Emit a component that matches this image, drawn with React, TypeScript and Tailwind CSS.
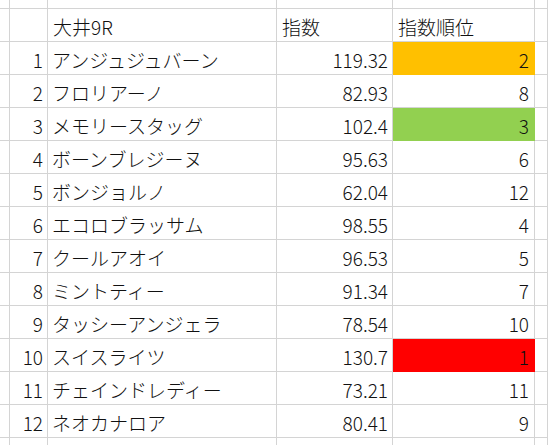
import React from "react";

const rows: [number, string, string, number, string | null][] = [
  [1, "アンジュジュバーン", "119.32", 2, "bg-[#ffc000]"],
  [2, "フロリアーノ", "82.93", 8, null],
  [3, "メモリースタッグ", "102.4", 3, "bg-[#92d050]"],
  [4, "ボーンブレジーヌ", "95.63", 6, null],
  [5, "ボンジョルノ", "62.04", 12, null],
  [6, "エコロブラッサム", "98.55", 4, null],
  [7, "クールアオイ", "96.53", 5, null],
  [8, "ミントティー", "91.34", 7, null],
  [9, "タッシーアンジェラ", "78.54", 10, null],
  [10, "スイスライツ", "130.7", 1, "bg-[#ff0000]"],
  [11, "チェインドレディー", "73.21", 11, null],
  [12, "ネオカナロア", "80.41", 9, null],
];

const cell = "border-r border-b border-[#d4d4d4] flex items-center overflow-hidden whitespace-nowrap";

export default function App() {
  return (
    <div
      className="w-[548px] h-[445px] overflow-hidden bg-white text-[19px] leading-none font-light text-[#111]"
      style={{ fontFamily: '"Noto Sans CJK JP", "Noto Sans", sans-serif' }}
    >
      <div className="grid grid-cols-[10px_38px_229px_116px_142px_13px] grid-rows-[9px_repeat(13,33px)_9px]">
        {Array.from({ length: 6 }).map((_, i) => (
          <div key={`t${i}`} className={cell} />
        ))}
        <div className={cell} />
        <div className={cell} />
        <div className={`${cell} pl-[5px] pt-[3px]`}>大井9R</div>
        <div className={`${cell} pl-[5px] pt-[3px]`}>指数</div>
        <div className={`${cell} pl-[5px] pt-[3px]`}>指数順位</div>
        <div className={cell} />
        {rows.map(([n, name, idx, rank, fill]) => (
          <React.Fragment key={n}>
            <div className={cell} />
            <div className={`${cell} justify-end pr-[4px] pt-[3px]`}>{n}</div>
            <div className={`${cell} pl-[4px] pt-[3px]`}>{name}</div>
            <div className={`${cell} justify-end pr-[4px] pt-[3px]`}>{idx}</div>
            <div
              className={`${cell} justify-end pr-[5px] pt-[3px] ${fill ? `${fill} border-transparent` : ""}`}
            >
              {rank}
            </div>
            <div className={cell} />
          </React.Fragment>
        ))}
        {Array.from({ length: 6 }).map((_, i) => (
          <div key={`b${i}`} className={cell} />
        ))}
      </div>
    </div>
  );
}
